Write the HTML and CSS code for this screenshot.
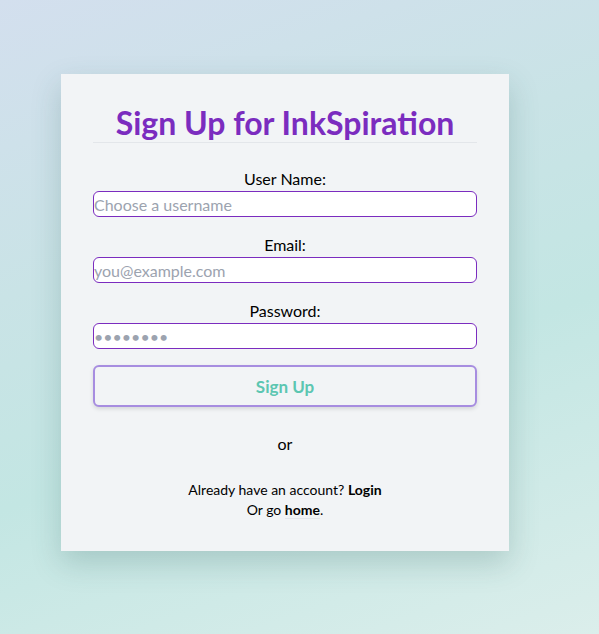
FILE: index.html
```html
<!DOCTYPE html>
<html lang="en">
<head>
<meta charset="utf-8">
<title>Sign Up - InkSpiration</title>
<link rel="stylesheet" href="styles.css">
</head>
<body>
<main class="page">
  <section class="card">
    <h1 class="title">Sign Up for InkSpiration</h1>
    <form class="form">
      <div class="field">
        <label class="label" for="username">User Name:</label>
        <input class="input" id="username" type="text" placeholder="Choose a username">
      </div>
      <div class="field">
        <label class="label" for="email">Email:</label>
        <input class="input" id="email" type="email" placeholder="you@example.com">
      </div>
      <div class="field">
        <label class="label" for="password">Password:</label>
        <input class="input" id="password" type="password" placeholder="••••••••">
      </div>
      <button class="btn" type="button">Sign Up</button>
    </form>
    <p class="or">or</p>
    <div class="links">
      <p class="line">Already have an account? <a class="link" href="#">Login</a></p>
      <p class="line">Or go <a class="link home" href="#">home</a>.</p>
    </div>
  </section>
</main>
</body>
</html>
```

FILE: styles.css
```css
html, body {
  margin: 0;
  height: 100%;
}
body {
  font-family: Lato, "Noto Sans", sans-serif;
  color: #000;
  background: linear-gradient(160deg, #d3dfee 0%, #c9e3e6 35%, #c3e6e3 60%, #dbeeeb 100%);
}
.page {
  padding: 74px 0 0 61px;
  box-sizing: border-box;
  height: 100%;
}
.card {
  width: 448px;
  height: 477px;
  box-sizing: border-box;
  background: #f2f4f6;
  padding: 30px 32px 30px;
  box-shadow: 0 12px 28px rgba(40, 90, 85, 0.22);
  text-align: center;
}
.title {
  margin: 0 0 24px;
  font-size: 32px;
  line-height: 38px;
  font-weight: 700;
  color: #7b2cbf;
  border-bottom: 1px solid #e3e6ea;
}
.form {
  display: flex;
  flex-direction: column;
}
.field {
  display: flex;
  flex-direction: column;
  margin-bottom: 16px;
}
.label {
  font-size: 16px;
  line-height: 24px;
}
.input {
  height: 26px;
  box-sizing: border-box;
  width: 100%;
  border: 1px solid #7b2cbf;
  border-radius: 6px;
  background: #fff;
  padding: 0;
  font-family: inherit;
  font-size: 16px;
  color: #000;
  outline: none;
}
.input::placeholder {
  color: #9ca3af;
}
.btn {
  height: 42px;
  border: 2px solid #a78de0;
  border-radius: 6px;
  background: #f2f4f6;
  color: #5cc6b1;
  font-family: inherit;
  font-size: 17px;
  font-weight: 700;
  box-shadow: 0 2px 4px rgba(0, 0, 0, 0.12);
  cursor: pointer;
}
.or {
  margin: 25px 0 0;
  font-size: 16px;
  line-height: 24px;
}
.links {
  margin-top: 24px;
}
.line {
  margin: 0;
  font-size: 14px;
  line-height: 20px;
}
.link {
  color: #000;
  font-weight: 700;
  text-decoration: none;
}
.home {
  border-bottom: 1px solid #e3e6ea;
}
```
